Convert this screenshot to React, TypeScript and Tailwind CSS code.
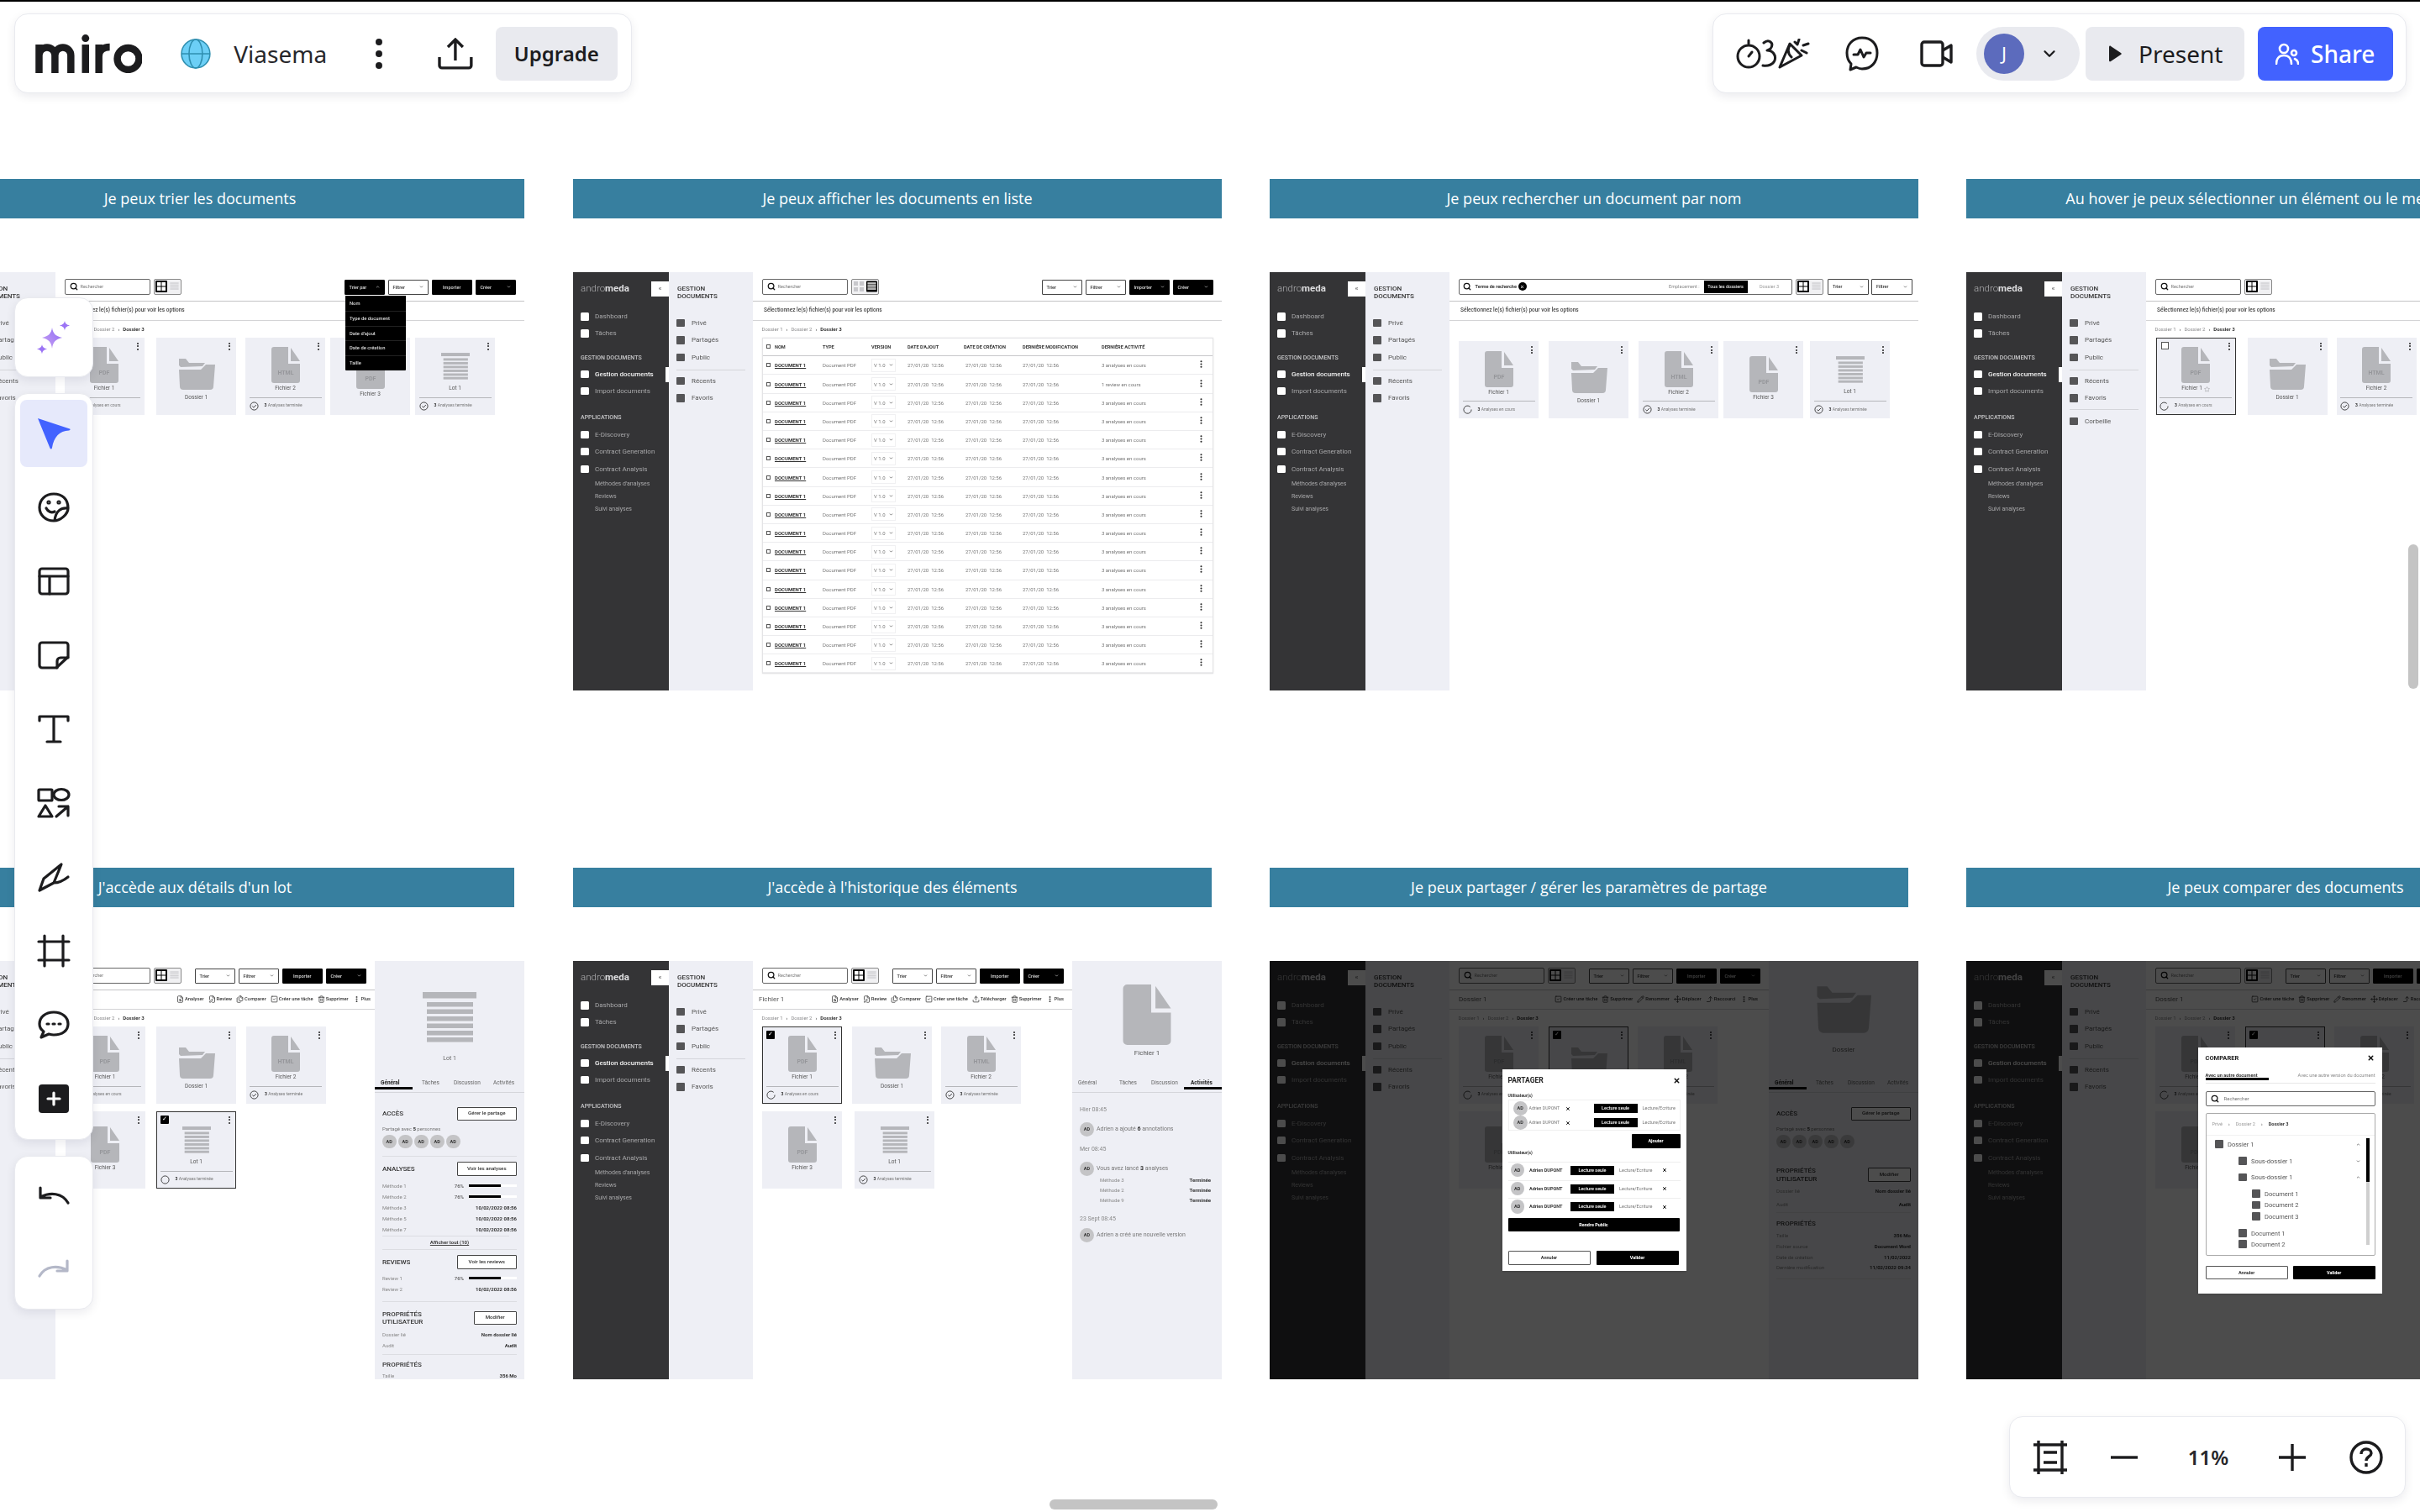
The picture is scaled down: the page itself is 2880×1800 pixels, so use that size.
import clsx from 'clsx';
import {
  ChevronDown,
  ChevronUp,
  CornerRightUp,
  FilePen,
  FileSearch,
  Files,
  Move,
  MoreVertical,
  Pencil,
  Search,
  SquareCheck,
  Star,
  Trash2,
  Upload,
  X,
} from 'lucide-react';
import { ReactNode } from 'react';

const INK = '#1c1c1e';

// ---- board drawings ----

const FileIcon = ({ label, className }: { label?: string; className?: string }) => (
  <svg viewBox="0 0 34 43" className={className}>
    <path
      d="M3 0H20V20H34V40a3 3 0 0 1-3 3H3a3 3 0 0 1-3-3V3a3 3 0 0 1 3-3Z"
      fill="#b5b6ba"
    />
    <path d="M23 1 34 17H23Z" fill="#b5b6ba" />
    {label && (
      <text x="17" y="33" textAnchor="middle" fontSize="7" fontWeight="700" fill="#96979b">
        {label}
      </text>
    )}
  </svg>
);

const FolderIcon = ({ className }: { className?: string }) => (
  <svg viewBox="0 0 44 37" className={className}>
    <path d="M1 0H9L13 5H32L29 9 3 10 1 8Z" fill="#b5b6ba" />
    <path
      d="M1 13H27L33 7H44L42 33a4 4 0 0 1-4 4H6a4 4 0 0 1-4-4Z"
      fill="#b5b6ba"
    />
  </svg>
);

const LotIcon = ({ className }: { className?: string }) => (
  <svg viewBox="0 0 64 60" className={className}>
    <rect x="0" width="64" height="7.5" fill="#b5b6ba" />
    {[12, 20.5, 29, 37.5, 46, 54].map((y) => (
      <rect key={y} x="5" y={y} width="55" height="5.5" fill="#b5b6ba" />
    ))}
  </svg>
);

const StatusIcon = ({ status }: { status: 'progress' | 'done' | 'empty' }) => (
  <svg viewBox="0 0 12 12" className="h-[11px] w-[11px] shrink-0" fill="none" stroke="#222" strokeWidth="0.9">
    {status === 'progress' && <path d="M9.5 2.6A5 5 0 1 0 11 6" />}
    {status !== 'progress' && <circle cx="6" cy="6" r="5" />}
    {status === 'done' && <path d="M3.6 6.1 5.4 7.8 8.6 4.4" />}
  </svg>
);

const Dots = ({ className }: { className?: string }) => (
  <div className={clsx('flex flex-col items-center gap-[1.5px]', className)}>
    <span className="h-[2px] w-[2px] rounded-full bg-[#222]" />
    <span className="h-[2px] w-[2px] rounded-full bg-[#222]" />
    <span className="h-[2px] w-[2px] rounded-full bg-[#222]" />
  </div>
);

// ---- mock: sidebars ----

const NavItem = ({ label, active, className }: { label: string; active?: boolean; className?: string }) => (
  <div className={clsx('relative flex h-[20px] items-center pl-[9px]', className)}>
    <span className="h-[9.5px] w-[10px] rounded-[1.5px] bg-white" />
    <span className={clsx('ml-[7px] text-[8px]', active ? 'font-medium text-[#f2f2f2]' : 'text-[#a8a8aa]')}>{label}</span>
    {active && <span className="absolute right-0 top-[1px] h-[18px] w-[4px] bg-white" />}
  </div>
);

const NavTitle = ({ label, className }: { label: string; className?: string }) => (
  <div className={clsx('flex h-[14px] items-center pl-[9px] text-[7px] font-medium text-[#c8c8ca]', className)}>{label}</div>
);

const SubItem = ({ label }: { label: string }) => (
  <div className="flex h-[15px] items-center pl-[26px] text-[7px] text-[#a8a8aa]">{label}</div>
);

const DarkSidebar = () => (
  <div className="w-[114px] shrink-0 bg-[#343436]">
    <div className="relative flex h-[40px] items-center pl-[9px] text-[11.5px] text-[#b0b0b2]">
      <span className="font-light">andro</span>
      <span className="font-bold text-[#dddddf]">meda</span>
      <div className="absolute right-0 top-[11px] flex h-[18px] w-[21px] items-center justify-center bg-white text-[7px] font-bold text-[#666]">«</div>
    </div>
    <NavItem label="Dashboard" className="mt-[3.5px]" />
    <NavItem label="Tâches" />
    <NavTitle label="GESTION DOCUMENTS" className="mt-[12.5px]" />
    <NavItem label="Gestion documents" active className="mt-[2px]" />
    <NavItem label="Import documents" />
    <NavTitle label="APPLICATIONS" className="mt-[14.5px]" />
    <NavItem label="E-Discovery" className="mt-[3.5px]" />
    <NavItem label="Contract Generation" />
    <NavItem label="Contract Analysis" className="mt-[1px]" />
    <SubItem label="Méthodes d'analyses" />
    <SubItem label="Reviews" />
    <SubItem label="Suivi analyses" />
  </div>
);

const PanelItem = ({ label }: { label: string }) => (
  <div className="flex h-[20.5px] items-center pl-[9px]">
    <span className="h-[9.5px] w-[10px] rounded-[1px] bg-[#555557]" />
    <span className="ml-[8px] text-[8px] text-[#555]">{label}</span>
  </div>
);

const LightPanel = ({ trash }: { trash?: boolean }) => (
  <div className="w-[100px] shrink-0 bg-[#eeeff5]">
    <div className="pl-[10px] pt-[15.5px] text-[8px] font-medium leading-[9.4px] text-[#333]">
      GESTION
      <br />
      DOCUMENTS
    </div>
    <div className="mt-[16.5px]">
      <PanelItem label="Privé" />
      <PanelItem label="Partagés" />
      <PanelItem label="Public" />
    </div>
    <div className="mx-[9px] mb-[2.5px] mt-[4px] h-px bg-[#d4d5da]" />
    <PanelItem label="Récents" />
    <PanelItem label="Favoris" />
    {trash && (
      <>
        <div className="mx-[9px] mb-[3px] mt-[3px] h-px bg-[#d4d5da]" />
        <PanelItem label="Corbeille" />
      </>
    )}
  </div>
);

// ---- mock: toolbar ----

const SearchBox = () => (
  <div className="flex h-[19px] w-[102px] items-center rounded-[2px] border border-[#666] bg-white pl-[5px]">
    <Search size={10} strokeWidth={3} color="#111" />
    <span className="ml-[3px] text-[5.5px] text-[#777]">Rechercher</span>
  </div>
);

const ViewToggle = ({ list }: { list?: boolean }) => (
  <div className="ml-[4px] flex h-[19px] w-[33px] items-center justify-center gap-[2px] rounded-[2px] border border-[#888] bg-[#f1f1f3]">
    <svg viewBox="0 0 14 14" className="h-[14px] w-[14px]">
      {list ? (
        <g fill="#c8c8cc">
          <rect x="1" y="1" width="5" height="5" />
          <rect x="8" y="1" width="5" height="5" />
          <rect x="1" y="8" width="5" height="5" />
          <rect x="8" y="8" width="5" height="5" />
        </g>
      ) : (
        <g>
          <rect width="14" height="14" rx="1" fill="#000" />
          <rect x="2" y="2" width="4.5" height="4.5" fill="#fff" />
          <rect x="7.5" y="2" width="4.5" height="4.5" fill="#fff" />
          <rect x="2" y="7.5" width="4.5" height="4.5" fill="#fff" />
          <rect x="7.5" y="7.5" width="4.5" height="4.5" fill="#fff" />
        </g>
      )}
    </svg>
    <svg viewBox="0 0 14 14" className="h-[14px] w-[13px]">
      {list && <rect width="14" height="14" rx="1" fill="#000" />}
      {[2, 4.5, 7, 9.5].map((y) => (
        <rect key={y} x="1.5" y={y} width="11" height="1.5" fill={list ? '#fff' : '#cfcfd3'} />
      ))}
    </svg>
  </div>
);

const Btn = ({ label, dark, open, chevron = true, className }: { label: string; dark?: boolean; open?: boolean; chevron?: boolean; className?: string }) => (
  <div
    className={clsx(
      'flex h-[18px] w-[48.5px] shrink-0 items-center rounded-[1px] border px-[5px] text-[5.5px] font-medium',
      dark ? 'border-black bg-black text-[#ddd]' : 'border-[#444] bg-white text-[#333]',
      chevron ? 'justify-between' : 'justify-center',
      className,
    )}
  >
    {label}
    {chevron && (open ? <ChevronUp size={5} strokeWidth={3} /> : <ChevronDown size={5} strokeWidth={3} />)}
  </div>
);

const Toolbar = ({ list, sortOpen, sortLabel = 'Trier', importChevron }: { list?: boolean; sortOpen?: boolean; sortLabel?: string; importChevron?: boolean }) => (
  <div className="flex h-[35px] items-start justify-between border-b border-[#c4c4c6] pl-[10.5px] pr-[10px] pt-[8px]">
    <div className="flex">
      <SearchBox />
      <ViewToggle list={list} />
    </div>
    <div className="mt-[1.4px] flex gap-[3.5px]">
      <Btn label={sortLabel} dark={sortOpen} open={sortOpen} />
      <Btn label="Filtrer" />
      <Btn label="Importer" dark chevron={!!importChevron} />
      <Btn label="Créer" dark />
    </div>
  </div>
);

const HintBar = () => (
  <div className="flex h-[23px] items-center border-b border-[#d4d4d6] pl-[13px] text-[6.5px] font-medium text-[#444]">
    Sélectionnez le(s) fichier(s) pour voir les options
  </div>
);

type Action = { icon: ReactNode; label: string };

const ActionBar = ({ title, actions, className }: { title?: string; actions: Action[]; className?: string }) => (
  <div className={clsx('flex h-[23px] items-center justify-between border-b border-[#d4d4d6] pl-[7px]', className)}>
    <span className="text-[8px] text-[#555]">{title}</span>
    <div className="flex items-center gap-[5px]">
      {actions.map((a) => (
        <span key={a.label} className="flex items-center gap-[1px] text-[5.8px] font-medium text-[#333]">
          {a.icon}
          {a.label}
        </span>
      ))}
    </div>
  </div>
);

const Crumbs = () => (
  <div className="flex h-[20px] items-center gap-[4px] pb-[4px] pl-[10.5px] pt-[3px] text-[6px] text-[#8a8a8c]">
    <span>Dossier 1</span>
    <span className="text-[#333]">›</span>
    <span>Dossier 2</span>
    <span className="text-[#333]">›</span>
    <span className="font-bold text-[#333]">Dossier 3</span>
  </div>
);

// ---- mock: cards ----

type Kind = 'pdf' | 'html' | 'pdf-plain' | 'folder' | 'lot';

const Card = ({
  kind,
  name,
  status,
  selected,
  checked,
  hover,
  star,
}: {
  kind: Kind;
  name: string;
  status?: ReactNode;
  selected?: boolean;
  checked?: boolean;
  hover?: boolean;
  star?: boolean;
}) => (
  <div
    className={clsx(
      'relative flex h-[92px] w-[95px] shrink-0 flex-col items-center bg-[#eeeff5]',
      selected && 'outline-[1.5px] -outline-offset-1 outline-[#333]',
      kind === 'folder' ? 'pt-[25px]' : kind === 'lot' ? 'pt-[18px]' : status ? 'pt-[11.5px]' : 'pt-[18px]',
    )}
  >
    <Dots className="absolute right-[7px] top-[6px]" />
    {hover && <span className="absolute left-[6px] top-[5px] h-[9px] w-[9px] border border-[#555] bg-white" />}
    {checked && (
      <span className="absolute left-[5px] top-[5px] flex h-[10px] w-[10px] items-center justify-center rounded-[1px] bg-black text-[7px] leading-none text-white">
        ✓
      </span>
    )}
    {kind === 'folder' && <FolderIcon className="h-[37px] w-[44px]" />}
    {kind === 'lot' && <LotIcon className="h-[32px] w-[34px]" />}
    {kind === 'pdf' && <FileIcon label="PDF" className="h-[43px] w-[34px] shrink-0" />}
    {kind === 'pdf-plain' && <FileIcon label="PDF" className="h-[43px] w-[34px] shrink-0" />}
    {kind === 'html' && <FileIcon label="HTML" className="h-[43px] w-[34px] shrink-0" />}
    <div className={clsx('flex h-[10px] items-center gap-[2px] text-[6.5px] text-[#555]', kind === 'folder' ? 'mt-[5px]' : kind === 'lot' ? 'mt-[6px]' : 'mt-[2px]')}>
      {name}
      {star && <Star size={7} strokeWidth={1} />}
    </div>
    {status}
  </div>
);

const CardStatus = ({ status, text }: { status: 'progress' | 'done' | 'empty'; text: string }) => (
  <div className="absolute inset-x-[4.5px] bottom-[5px] flex h-[16px] items-end border-t border-[#b5b6ba] text-[5px] text-[#777]">
    <StatusIcon status={status} />
    <span className="mb-[2px] ml-[7px]">
      <b className="text-[#333]">3</b> {text}
    </span>
  </div>
);

const Running = () => <CardStatus status="progress" text="Analyses en cours" />;
const Done = () => <CardStatus status="done" text="Analyses terminée" />;

// ---- mock: list view ----

const GRID = 'grid grid-cols-[14px_57px_58px_43px_67px_70px_94px_1fr] items-center';

const ListTable = () => (
  <div className="ml-[11px] mr-[10px] border border-[#e4e4e6] shadow-[0_0_2px_rgba(0,0,0,0.1)]">
    <div className={clsx(GRID, 'h-[21.8px] border-b border-[#c8c8ca] text-[5.6px] font-bold text-[#333]')}>
      <span className="ml-[4px] h-[5px] w-[4.5px] border border-[#555]" />
      <span>NOM</span>
      <span>TYPE</span>
      <span>VERSION</span>
      <span>DATE D'AJOUT</span>
      <span>DATE DE CRÉATION</span>
      <span>DERNIÈRE MODIFICATION</span>
      <span>DERNIÈRE ACTIVITÉ</span>
    </div>
    {Array.from({ length: 17 }, (_, i) => (
      <div key={i} className={clsx(GRID, 'h-[22.2px] border-b border-[#ececee] text-[6px] text-[#777]')}>
        <span className="ml-[4px] h-[5px] w-[4.5px] border border-[#555]" />
        <span className="font-bold text-[#333] underline">DOCUMENT 1</span>
        <span>Document PDF</span>
        <span className="flex h-[16px] w-[29px] items-center justify-between border border-[#f0f0f2] px-[2px]">
          V 1.0 <ChevronDown size={5} strokeWidth={3} color="#333" />
        </span>
        <span>27/01/20&nbsp; 12:56</span>
        <span className="pl-[2px]">27/01/20&nbsp; 12:56</span>
        <span>27/01/20&nbsp; 12:56</span>
        <span className="relative">
          {i === 1 ? '1 review en cours' : '3 analyses en cours'}
          <MoreVertical size={11} strokeWidth={2.5} color="#222" className="absolute right-[8px] top-[-2px]" />
        </span>
      </div>
    ))}
  </div>
);

// ---- mock: detail panels ----

const Tabs = ({ active }: { active: 'general' | 'activity' }) => (
  <div className="flex h-[20px] items-center border-b border-[#d4d5da] text-[6.5px] text-[#666]">
    <div className={clsx('relative ml-[7px] w-[49px]', active === 'general' && 'font-bold text-[#222]')}>
      Général
      {active === 'general' && <span className="absolute left-[-7px] top-[9px] h-[3px] w-[45px] bg-black" />}
    </div>
    <div className="w-[38px]">Tâches</div>
    <div className="w-[47px]">Discussion</div>
    <div className={clsx('relative', active === 'activity' && 'font-bold text-[#222]')}>
      Activités
      {active === 'activity' && <span className="absolute left-[-8px] top-[9px] h-[3px] w-[46px] bg-black" />}
    </div>
  </div>
);

const SectionHead = ({ title, action, small, className }: { title: ReactNode; action: string; small?: boolean; className?: string }) => (
  <div className={clsx('flex items-center justify-between', className)}>
    <span className="text-[8px] font-medium leading-[9.5px] text-[#333]">{title}</span>
    <span className={clsx('flex h-[16.5px] items-center justify-center rounded-[1px] border border-[#444] bg-white text-[6.2px] font-medium text-[#333]', small ? 'w-[51.5px]' : 'w-[71.5px]')}>{action}</span>
  </div>
);

const KV = ({ k, v, className }: { k: string; v: ReactNode; className?: string }) => (
  <div className={clsx('flex h-[12.8px] items-center justify-between text-[6px] text-[#888]', className)}>
    <span>{k}</span>
    <span className="font-bold text-[#333]">{v}</span>
  </div>
);

const Meter = ({ k, className }: { k: string; className?: string }) => (
  <div className={clsx('flex h-[12.8px] items-center text-[6px] text-[#888]', className)}>
    <span className="w-[86px]">{k}</span>
    <span className="w-[17.5px] font-medium text-[#555]">76%</span>
    <span className="h-[3px] w-[57px] bg-white">
      <span className="block h-[3px] w-[38px] bg-black" />
    </span>
  </div>
);

const Avatar = ({ className }: { className?: string }) => (
  <span className={clsx('flex h-[16.5px] w-[16.5px] shrink-0 items-center justify-center rounded-full bg-[#c4c4c6] text-[5.5px] font-bold text-[#333]', className)}>AD</span>
);

const Rule = ({ className }: { className?: string }) => <div className={clsx('h-px bg-[#dcdde2]', className)} />;

const AccessBlock = () => (
  <>
    <SectionHead title="ACCÈS" action="Gérer le partage" className="mt-[17px]" />
    <div className="mt-[4.5px] h-[10px] text-[6px] leading-[10px] text-[#777]">
      Partagé avec <b className="text-[#333]">5</b> personnes
    </div>
    <div className="mt-[2px] flex gap-[2.5px]">
      {[0, 1, 2, 3, 4].map((i) => (
        <Avatar key={i} />
      ))}
    </div>
  </>
);

const LotDetails = () => (
  <div className="w-[178px] shrink-0 overflow-hidden bg-[#eeeff5]">
    <div className="flex h-[137px] flex-col items-center pt-[37px]">
      <LotIcon className="h-[60px] w-[64px]" />
      <span className="mt-[14px] text-[7px] text-[#666]">Lot 1</span>
    </div>
    <Tabs active="general" />
    <div className="px-[9px]">
      <AccessBlock />
      <Rule className="mt-[9px]" />
      <SectionHead title="ANALYSES" action="Voir les analyses" className="mt-[6px]" />
      <Meter k="Méthode 1" className="mt-[6px]" />
      <Meter k="Méthode 2" />
      <KV k="Méthode 3" v="10/02/2022 08:56" />
      <KV k="Méthode 5" v="10/02/2022 08:56" />
      <KV k="Méthode 7" v="10/02/2022 08:56" />
      <Rule className="mr-[9px] mt-[2px] bg-[#c4c5ca]" />
      <div className="h-[12px] text-center text-[6px] font-bold leading-[14px] text-[#444] underline">Afficher tout (10)</div>
      <Rule className="mt-[3px]" />
      <SectionHead title="REVIEWS" action="Voir les reviews" className="mt-[6px]" />
      <Meter k="Review 1" className="mt-[4px]" />
      <KV k="Review 2" v="10/02/2022 08:56" />
      <Rule className="mt-[8px]" />
      <SectionHead
        title={
          <>
            PROPRIÉTÉS
            <br />
            UTILISATEUR
          </>
        }
        action="Modifier"
        small
        className="mt-[10px]"
      />
      <KV k="Dossier lié" v="Nom dossier lié" className="mt-[3.5px]" />
      <KV k="Audit" v="Audit" />
      <Rule className="mt-[4px] bg-[#c4c5ca]" />
      <div className="mt-[6px] text-[8px] font-medium leading-[12px] text-[#333]">PROPRIÉTÉS</div>
      <KV k="Taille" v="356 Mo" />
    </div>
  </div>
);

const FolderDetails = () => (
  <div className="w-[178px] shrink-0 bg-[#eeeff5]">
    <div className="flex h-[137px] flex-col items-center pt-[30px]">
      <FolderIcon className="h-[56px] w-[66px]" />
      <span className="mt-[14px] text-[8px] text-[#555]">Dossier</span>
    </div>
    <Tabs active="general" />
    <div className="px-[9px]">
      <AccessBlock />
      <SectionHead
        title={
          <>
            PROPRIÉTÉS
            <br />
            UTILISATEUR
          </>
        }
        action="Modifier"
        small
        className="mt-[22px]"
      />
      <KV k="Dossier lié" v="Nom dossier lié" className="mt-[3px]" />
      <KV k="Audit" v="Audit" className="mt-[3px]" />
      <Rule className="mt-[3px]" />
      <div className="mt-[7px] text-[8px] font-medium leading-[12px] text-[#333]">PROPRIÉTÉS</div>
      <KV k="Taille" v="356 Mo" className="mt-[1.5px]" />
      <KV k="Fichier source" v="Document Word" />
      <KV k="Date de création" v="11/02/2022" />
      <KV k="Dernière modification" v="11/02/2022 09:34" />
      <Rule className="mt-[7px]" />
    </div>
  </div>
);

const ActivityRow = ({ children, className }: { children: ReactNode; className?: string }) => (
  <div className={clsx('flex items-center gap-[3px] text-[7px] text-[#777]', className)}>
    <Avatar className="h-[17px] w-[17px]" />
    <span>{children}</span>
  </div>
);

const FileDetails = () => (
  <div className="w-[178px] shrink-0 bg-[#eeeff5]">
    <div className="flex h-[137px] flex-col items-center pt-[28px]">
      <FileIcon className="h-[72px] w-[58px]" />
      <span className="mt-[4px] text-[8px] text-[#555]">Fichier 1</span>
    </div>
    <Tabs active="activity" />
    <div className="px-[9px] pr-[13px] text-[7px] text-[#888]">
      <div className="mt-[15px] h-[10px] leading-[10px]">Hier 08:45</div>
      <ActivityRow className="mt-[10px]">
        Adrien a ajouté <b className="text-[#333]">6</b> annotations
      </ActivityRow>
      <div className="mt-[10px] h-[10px] leading-[10px]">Mer 08:45</div>
      <ActivityRow className="mt-[10px]">
        Vous avez lancé <b className="text-[#333]">3</b> analyses
      </ActivityRow>
      <div className="-mt-[1px] pl-[24px]">
        <KV k="Méthode 3" v="Terminée" className="h-[12px]" />
        <KV k="Méthode 2" v="Terminée" className="h-[12px]" />
        <KV k="Méthode 9" v="Terminée" className="h-[12px]" />
      </div>
      <div className="mt-[11px] h-[10px] leading-[10px]">23 Sept 08:45</div>
      <ActivityRow className="mt-[6px]">Adrien a créé une nouvelle version</ActivityRow>
    </div>
  </div>
);

// ---- mock: modals ----

const ModalBtn = ({ label, dark, className }: { label: string; dark?: boolean; className?: string }) => (
  <span className={clsx('flex h-[16.5px] items-center justify-center rounded-[1px] text-[5.5px] font-bold', dark ? 'bg-black text-white' : 'border border-[#555] bg-white text-[#333]', className)}>
    {label}
  </span>
);

const Perm = ({ className }: { className?: string }) => (
  <span className={clsx('flex h-[11px] w-[104px] items-center whitespace-nowrap bg-white text-[5.5px] text-[#777]', className)}>
    <span className="flex h-[11px] w-[52px] items-center justify-center bg-black font-medium text-white">Lecture seule</span>
    <span className="ml-[6px]">Lecture/Ecriture</span>
  </span>
);

const ShareRow = ({ small, className }: { small?: boolean; className?: string }) =>
  small ? (
    <div className={clsx('flex h-[16px] items-center pl-[5.5px]', className)}>
      <Avatar className="h-[12px] w-[12px] text-[3.5px]" />
      <span className="ml-[2px] w-[44px] whitespace-nowrap text-[5.2px] text-[#777]">Adrien DUPONT</span>
      <X size={6} strokeWidth={4} color="#111" />
      <Perm className="ml-[28px]" />
    </div>
  ) : (
    <div className={clsx('flex h-[20px] items-center border-t border-[#eeeeee] pl-[3px]', className)}>
      <Avatar className="h-[15px] w-[15px]" />
      <span className="ml-[6px] w-[46px] whitespace-nowrap text-[5.5px] font-bold text-[#333]">Adrien DUPONT</span>
      <Perm className="ml-[3px]" />
      <X size={6} strokeWidth={4} color="#111" className="ml-[5px]" />
    </div>
  );

const ShareModal = () => (
  <div className="absolute left-[276.5px] top-[129px] h-[240px] w-[219px] bg-white px-[7px] shadow-sm">
    <div className="flex h-[27px] items-center justify-between">
      <span className="text-[8.5px] font-bold text-[#222]">PARTAGER</span>
      <X size={9} strokeWidth={4} color="#111" />
    </div>
    <div className="h-[8px] text-[5px] font-bold leading-[8px] text-[#333]">Utilisateur(s)</div>
    <div className="mt-[1px] h-[37px] border border-[#f0f0f0] pt-[2px]">
      <ShareRow small />
      <ShareRow small className="mt-[1px]" />
    </div>
    <div className="mt-[4.5px] flex justify-end">
      <ModalBtn label="Ajouter" dark className="w-[58px]" />
    </div>
    <div className="mt-[1px] h-[8px] text-[5px] font-bold leading-[8px] text-[#333]">Utilisateur(s)</div>
    <ShareRow className="mt-[7px]" />
    <ShareRow className="mt-[2px]" />
    <ShareRow className="mt-[1.5px]" />
    <ModalBtn label="Rendre Public" dark className="mt-[3.5px] w-[204px]" />
    <div className="mt-[23px] flex gap-[7px]">
      <ModalBtn label="Annuler" className="w-[98px]" />
      <ModalBtn label="Valider" dark className="w-[98px]" />
    </div>
  </div>
);

const TreeRow = ({ label, indent, chevron }: { label: string; indent: string; chevron?: 'up' | 'down' }) => (
  <div className={clsx('flex items-center pr-[17px]', indent)}>
    <span className="h-[9.5px] w-[10px] rounded-[1px] bg-[#555557]" />
    <span className="ml-[5.5px] flex-1 text-[7.5px] text-[#555]">{label}</span>
    {chevron === 'up' && <ChevronUp size={5} strokeWidth={3} color="#333" />}
    {chevron === 'down' && <ChevronDown size={5} strokeWidth={3} color="#333" />}
  </div>
);

const CompareModal = () => (
  <div className="absolute left-[276px] top-[103px] h-[293px] w-[219px] bg-white px-[8.5px] shadow-sm">
    <div className="flex h-[26px] items-center justify-between">
      <span className="text-[7.5px] font-bold text-[#222]">COMPARER</span>
      <X size={9} strokeWidth={4} color="#111" className="mr-[1px]" />
    </div>
    <div className="flex h-[17px] items-center justify-between border-b border-[#e8e8e8] text-[5.7px] text-[#888]">
      <span className="relative font-bold text-[#333]">
        Avec un autre document
        <span className="absolute left-0 top-[7px] h-[3px] w-[75px] bg-black" />
      </span>
      <span>Avec une autre version du document</span>
    </div>
    <div className="mt-[9px] flex h-[18px] items-center rounded-[2px] border border-[#666] pl-[5px]">
      <Search size={10} strokeWidth={3} color="#111" />
      <span className="ml-[6px] text-[6px] text-[#777]">Rechercher</span>
    </div>
    <div className="relative mt-[8px] h-[170px] rounded-[2px] border border-[#aaa]">
      <div className="flex h-[26px] items-center gap-[7px] border-b border-[#f2f2f2] pl-[7px] text-[5.6px] text-[#999]">
        <span>Privé</span>
        <span className="text-[#333]">›</span>
        <span>Dossier 2</span>
        <span className="text-[#333]">›</span>
        <span className="font-bold text-[#333]">Dossier 3</span>
      </div>
      <div className="mt-[5px] flex flex-col">
        <div className="h-[20px]">
          <TreeRow label="Dossier 1" indent="pl-[10px]" chevron="up" />
        </div>
        <div className="h-[19.5px]">
          <TreeRow label="Sous-dossier 1" indent="pl-[38px]" chevron="down" />
        </div>
        <div className="h-[19.5px]">
          <TreeRow label="Sous-dossier 1" indent="pl-[38px]" chevron="up" />
        </div>
        <div className="h-[13.5px]">
          <TreeRow label="Document 1" indent="pl-[54px]" />
        </div>
        <div className="h-[13.5px]">
          <TreeRow label="Document 2" indent="pl-[54px]" />
        </div>
        <div className="h-[20px]">
          <TreeRow label="Document 3" indent="pl-[54px]" />
        </div>
        <div className="h-[13px]">
          <TreeRow label="Document 1" indent="pl-[38px]" />
        </div>
        <div className="h-[13px]">
          <TreeRow label="Document 2" indent="pl-[38px]" />
        </div>
      </div>
      <div className="absolute right-[6px] top-[29px] h-[127px] w-[4px] bg-[#cfcfcf]">
        <div className="h-[52px] w-[4px] bg-black" />
      </div>
    </div>
    <div className="mt-[12px] flex gap-[6px]">
      <ModalBtn label="Annuler" className="w-[99px]" />
      <ModalBtn label="Valider" dark className="w-[98.5px]" />
    </div>
  </div>
);

// ---- action sets ----

const ic = 'shrink-0';
const A = {
  analyser: { icon: <FileSearch size={9} className={ic} />, label: 'Analyser' },
  review: { icon: <FilePen size={9} className={ic} />, label: 'Review' },
  comparer: { icon: <Files size={9} className={ic} />, label: 'Comparer' },
  tache: { icon: <SquareCheck size={9} className={ic} />, label: 'Créer une tâche' },
  telecharger: { icon: <Upload size={9} className={ic} />, label: 'Télécharger' },
  supprimer: { icon: <Trash2 size={9} className={ic} />, label: 'Supprimer' },
  renommer: { icon: <Pencil size={9} className={ic} />, label: 'Renommer' },
  deplacer: { icon: <Move size={9} className={ic} />, label: 'Déplacer' },
  raccourci: { icon: <CornerRightUp size={9} className={ic} />, label: 'Raccourci' },
  plus: { icon: <MoreVertical size={9} strokeWidth={3} className={ic} />, label: 'Plus' },
};

const folderActions = [A.tache, A.supprimer, A.renommer, A.deplacer, A.raccourci, A.plus];

// ---- frame ----

const Frame = ({ title, className, titleClass, children }: { title: string; className: string; titleClass: string; children: ReactNode }) => (
  <section className={clsx('absolute w-[772px]', className)}>
    <div className={clsx("flex h-[47px] items-center justify-center bg-[#377f9f] font-['Open_Sans',sans-serif] text-[18px] text-white", titleClass)}>
      <span className="whitespace-nowrap">{title}</span>
    </div>
    <div className="relative mt-[63.5px] flex h-[498px] w-[772px] overflow-hidden bg-white font-['Roboto',sans-serif] blur-[0.3px]">{children}</div>
  </section>
);

const TwoRows = ({ second }: { second?: 'lot' | 'dossier' | 'none' }) => (
  <div className="pl-[11px]">
    <div className="flex">
      <Card kind="pdf" name="Fichier 1" status={<Running />} selected={second === 'lot'} checked={second === 'lot'} />
      <div className="w-[12px] shrink-0" />
      <Card kind="folder" name="Dossier 1" selected={second === 'dossier'} checked={second === 'dossier'} />
      <div className="w-[11px] shrink-0" />
      <Card kind="html" name="Fichier 2" status={<Done />} />
    </div>
    <div className="mt-[9px] flex">
      <Card kind="pdf-plain" name="Fichier 3" />
      <div className="w-[15px] shrink-0" />
      <Card kind="lot" name="Lot 1" status={<Done />} />
    </div>
  </div>
);

// ---- miro chrome ----

const Box = ({ className, children }: { className: string; children: ReactNode }) => (
  <div className={clsx('absolute rounded-[16px] border border-[#e9eaef] bg-white shadow-[0_4px_12px_rgba(5,0,56,0.08)]', className)}>{children}</div>
);

const ToolIcon = ({ children, active, viewBox = '0 0 40 40' }: { children: ReactNode; active?: boolean; viewBox?: string }) => (
  <div className={clsx('mb-[8px] flex h-[80px] w-[80px] items-center justify-center rounded-[8px]', active && 'bg-[#e6e9fb]')}>
    <svg viewBox={viewBox} className="h-[40px] w-[40px]" fill="none" stroke={INK} strokeWidth="3.2" strokeLinecap="round" strokeLinejoin="round">
      {children}
    </svg>
  </div>
);

const MiroLogo = () => (
  <svg viewBox="0 0 128 46" className="h-[46px] w-[128px]" fill="none" stroke="#1c1c1e" strokeWidth="8.5">
    <path d="M4.5 46V12M4.5 25a8.5 8.5 0 0 1 19 0V46M23.5 25a8.5 8.5 0 0 1 19 0V46" />
    <path d="M60 46V12" />
    <circle cx="60" cy="4.5" r="4.5" fill="#1c1c1e" stroke="none" />
    <path d="M76 46V12M76 26c0-7 5-11 13-11" />
    <circle cx="111" cy="29" r="13" />
  </svg>
);

const TopLeft = () => (
  <Box className="left-[17px] top-[16px] flex h-[95px] w-[735px] items-center pl-[24px] pr-[16px] font-['Noto_Sans',sans-serif]">
    <MiroLogo />
    <svg viewBox="0 0 36 36" className="ml-[46px] h-[36px] w-[36px]" fill="#6ccff6" stroke="#2f8fb0" strokeWidth="1.6">
      <circle cx="18" cy="18" r="17" />
      <ellipse cx="18" cy="18" rx="8" ry="17" fill="none" />
      <path d="M1 18h34" />
    </svg>
    <span className="ml-[27px] w-[112px] whitespace-nowrap text-[28px] text-[#27272b]">Viasema</span>
    <svg viewBox="0 0 8 36" className="ml-[57px] h-[36px] w-[8px]" fill={INK}>
      <circle cx="4" cy="4" r="4" />
      <circle cx="4" cy="18" r="4" />
      <circle cx="4" cy="32" r="4" />
    </svg>
    <svg viewBox="0 0 42 38" className="ml-[66px] h-[38px] w-[42px]" fill="none" stroke={INK} strokeWidth="3.4">
      <path d="M21 27V2M12 11l9-9 9 9" />
      <path d="M2 23v10a3 3 0 0 0 3 3h32a3 3 0 0 0 3-3V23" />
    </svg>
    <span className="ml-[27px] flex h-[64px] w-[146px] items-center justify-center rounded-[8px] bg-[#e9eaef] text-[24px] font-semibold text-[#1c1c1e]">Upgrade</span>
  </Box>
);

const TopRight = () => (
  <Box className="left-[2038px] top-[16px] flex h-[95px] w-[826px] items-center pl-[27px] font-['Noto_Sans',sans-serif]">
    <svg viewBox="0 0 88 36" className="h-[36px] w-[88px]" fill="none" stroke={INK} strokeWidth="3" strokeLinecap="round" strokeLinejoin="round">
      <circle cx="15" cy="21" r="13" />
      <path d="M15 2v4M15 21l4-5" />
      <path d="M33 5c6-5 13 0 8 7l-4 2c7 0 11 6 9 12-2 5-8 7-14 6" />
      <path d="M52 34 78 20 64 6 52 34Z" />
      <path d="M66 22c-4-4-5-9-2-14M70 4l3 3 2-6M80 8l6-2M78 14l6 3" />
    </svg>
    <svg viewBox="0 0 42 42" className="ml-[41px] h-[42px] w-[42px]" fill="none" stroke={INK} strokeWidth="3" strokeLinecap="round" strokeLinejoin="round">
      <path d="M21 2C10 2 3 10 3 20c0 6 2 10 5 13l-1 7 7-3c2 1 5 2 7 2 11 0 18-8 18-19S32 2 21 2Z" />
      <path d="M11 22h5l3-6 4 9 3-5h5" />
    </svg>
    <svg viewBox="0 0 40 32" className="ml-[48px] h-[32px] w-[40px]" fill="none" stroke={INK} strokeWidth="3.4" strokeLinejoin="round">
      <rect x="2" y="2" width="25" height="28" rx="3" />
      <path d="M27 12l10-6v20l-10-6" />
    </svg>
    <div className="ml-[27px] flex h-[64px] w-[123px] items-center rounded-full bg-[#e9eaef] pl-[9px]">
      <span className="flex h-[48px] w-[48px] items-center justify-center rounded-full bg-[#5c6bbd] text-[22px] text-white">J</span>
      <ChevronDown size={22} strokeWidth={2.5} color={INK} className="ml-[19px]" />
    </div>
    <div className="ml-[7px] flex h-[64px] w-[189px] items-center rounded-[8px] bg-[#e9eaef] pl-[27px] text-[28px] text-[#1c1c1e]">
      <svg viewBox="0 0 16 20" className="h-[20px] w-[16px]" fill={INK}>
        <path d="M1 2c0-1 1-2 2-1l12 8c1 .6 1 1.4 0 2L3 19c-1 .6-2 0-2-1Z" />
      </svg>
      <span className="ml-[20px]">Present</span>
    </div>
    <div className="ml-[16px] flex h-[64px] w-[161px] items-center rounded-[8px] bg-[#4262ff] pl-[21px] text-[28px] font-medium text-white">
      <svg viewBox="0 0 28 26" className="h-[26px] w-[28px]" fill="none" stroke="#fff" strokeWidth="2.6" strokeLinecap="round">
        <circle cx="10" cy="7" r="5" />
        <path d="M1 25c0-6 3-10 9-10s9 4 9 10" />
        <circle cx="22" cy="12" r="3" />
        <path d="M23 19c2 1 4 3 4 6" />
      </svg>
      <span className="ml-[14px]">Share</span>
    </div>
  </Box>
);

const LeftBar = () => (
  <div className="absolute left-[17px] top-[354px] flex w-[94px] flex-col gap-[19px]">
    <div className="flex h-[95px] items-center justify-center rounded-[16px] border border-[#e9eaef] bg-white shadow-[0_4px_12px_rgba(5,0,56,0.08)]">
      <svg viewBox="0 0 40 40" className="h-[40px] w-[40px]">
        <defs>
          <linearGradient id="spark" x1="0" y1="1" x2="1" y2="0">
            <stop offset="0" stopColor="#cda4f2" />
            <stop offset="1" stopColor="#8b6af5" />
          </linearGradient>
        </defs>
        <path d="M18 8c1 7 4 10 12 12-8 2-11 5-12 13-1-8-4-11-12-13 8-2 11-5 12-12Z" fill="url(#spark)" />
        <path d="M33 0c.5 3 2 4.500 6 5.500-4 1-5.500 2.500-6 6-.5-3.500-2-5-6-6 4-1 5.500-2.500 6-5.500Z" fill="#9c74f5" />
        <path d="M6 28c.5 3 2 4.500 6 5.500-4 1-5.500 2.500-6 6-.5-3.500-2-5-6-6 4-1 5.500-2.500 6-5.500Z" fill="#9c74f5" />
      </svg>
    </div>
    <div className="flex flex-col items-center rounded-[16px] border border-[#e9eaef] bg-white pt-[7px] shadow-[0_4px_12px_rgba(5,0,56,0.08)]">
      <ToolIcon active>
        <path d="M1 2 39 14.500C40 15 39.500 16.500 38 16.500 27 17 20 24 18 37c-.3 2-2 2-2.500.5Z" fill="#4262ff" stroke="none" />
      </ToolIcon>
      <ToolIcon>
        <path d="M37 21C37 10 30 4 20 4S3 11 3 20s7 16 17 16c8 0 17-8 17-15Zm0 0c-8-1-15 3-16 15" />
        <path d="M11 21c2 4 6 6 10 4" />
        <circle cx="14" cy="14" r="1" />
        <circle cx="26" cy="14" r="1" />
      </ToolIcon>
      <ToolIcon>
        <rect x="3" y="5" width="34" height="30" rx="3" />
        <path d="M3 14h34M15 14v21" />
      </ToolIcon>
      <ToolIcon>
        <path d="M6 5h28a3 3 0 0 1 3 3v14L23 35H6a3 3 0 0 1-3-3V8a3 3 0 0 1 3-3Z" />
        <path d="M37 23H28a4 4 0 0 0-4 4v8" />
      </ToolIcon>
      <ToolIcon>
        <path d="M3 10V5h34v5M20 5v30M12 35h16" />
      </ToolIcon>
      <ToolIcon>
        <rect x="2" y="4" width="16" height="13" rx="1" />
        <path d="M10 23 18 36H2Z" />
        <ellipse cx="29" cy="10" rx="9" ry="6.500" />
        <path d="M23 36 37 24M26 24h11v11" />
      </ToolIcon>
      <ToolIcon>
        <path d="M3 36 8 22 29 5 20 27 3 36ZM20 27c6 0 12-3 17-7" />
      </ToolIcon>
      <ToolIcon>
        <path d="M9 2v36M31 2v36M2 9h36M2 31h36" />
      </ToolIcon>
      <ToolIcon>
        <path d="M20 5C10 5 3 11 3 19c0 4 2 7 5 9l-3 7 9-4c2 .5 4 1 6 1 10 0 17-5 17-13S30 5 20 5Z" />
        <path d="M12 19h2M19 19h2M26 19h2" />
      </ToolIcon>
      <ToolIcon>
        <rect x="2" y="3" width="36" height="34" rx="4" fill={INK} stroke="none" />
        <path d="M20 13v14M13 20h14" stroke="#fff" />
      </ToolIcon>
    </div>
    <div className="flex h-[183px] flex-col items-center rounded-[16px] border border-[#e9eaef] bg-white pt-[7px] shadow-[0_4px_12px_rgba(5,0,56,0.08)]">
      <ToolIcon>
        <path d="M37 28C30 16 16 15 4 21M4 10v12h12" />
      </ToolIcon>
      <div className="-mt-[1px] flex h-[80px] w-[80px] items-center justify-center">
        <svg viewBox="0 0 40 40" className="h-[40px] w-[40px]" fill="none" stroke="#b4b8c8" strokeWidth="3.2" strokeLinecap="round" strokeLinejoin="round">
          <path d="M3 28C10 16 24 15 36 21M36 10v12H24" />
        </svg>
      </div>
    </div>
  </div>
);

const ZoomBar = () => (
  <Box className="left-[2391px] top-[1686px] flex h-[97px] w-[472px] items-center pl-[28px] font-['Noto_Sans',sans-serif]">
    <svg viewBox="0 0 40 40" className="h-[40px] w-[40px]" fill="none" stroke={INK} strokeWidth="3.4">
      <path d="M6 0v40M34 0v40M0 5h40M0 35h40M12 14h16M12 26h16" />
    </svg>
    <svg viewBox="0 0 32 32" className="ml-[52px] h-[32px] w-[32px]" fill="none" stroke={INK} strokeWidth="3.4">
      <path d="M0 16h32" />
    </svg>
    <span className="ml-[56px] w-[56px] text-center text-[24px] font-semibold text-[#27272b]">11%</span>
    <svg viewBox="0 0 32 32" className="ml-[56px] h-[32px] w-[32px]" fill="none" stroke={INK} strokeWidth="3.4">
      <path d="M0 16h32M16 0v32" />
    </svg>
    <svg viewBox="0 0 40 40" className="ml-[52px] h-[40px] w-[40px]" fill="none" stroke={INK} strokeWidth="3.4">
      <circle cx="20" cy="20" r="18" />
      <path d="M14 16c0-4 3-6 6-6s6 2 6 5c0 4-6 4-6 9" />
      <path d="M20 27v4" />
    </svg>
  </Box>
);

export default function App() {
  return (
    <div className="relative h-[1800px] w-[2880px] overflow-hidden bg-white">
      <div className="h-[2px] bg-black" />

      <Frame title="Je peux trier les documents" className="left-[-148px] top-[213px]" titleClass="w-[772px]">
        <DarkSidebar />
        <LightPanel />
        <div className="relative min-w-0 flex-1">
          <Toolbar sortOpen sortLabel="Trier par" />
          <HintBar />
          <Crumbs />
          <div className="flex pl-[10.5px]">
            <Card kind="pdf" name="Fichier 1" status={<Running />} />
            <div className="w-[14.5px] shrink-0" />
            <Card kind="folder" name="Dossier 1" />
            <div className="w-[11px] shrink-0" />
            <Card kind="html" name="Fichier 2" status={<Done />} />
            <div className="w-[6px] shrink-0" />
            <Card kind="pdf-plain" name="Fichier 3" />
            <div className="w-[6px] shrink-0" />
            <Card kind="lot" name="Lot 1" status={<Done />} />
          </div>
          <div className="absolute left-[345px] top-[28.5px] w-[71.500px] rounded-b-[1px] bg-black text-[5.8px] font-medium text-[#ddd]">
            {['Nom', 'Type de document', 'Date d’ajout', 'Date de création', 'Taille'].map((o, i) => (
              <div key={o} className={clsx('flex h-[17.8px] items-center pl-[5px]', i > 0 && 'border-t border-[#222]')}>
                {o}
              </div>
            ))}
          </div>
        </div>
      </Frame>

      <Frame title="Je peux afficher les documents en liste" className="left-[682px] top-[213px]" titleClass="w-[772px]">
        <DarkSidebar />
        <LightPanel />
        <div className="min-w-0 flex-1">
          <Toolbar list importChevron />
          <HintBar />
          <Crumbs />
          <ListTable />
        </div>
      </Frame>

      <Frame title="Je peux rechercher un document par nom" className="left-[1511px] top-[213px]" titleClass="w-[772px]">
        <DarkSidebar />
        <LightPanel />
        <div className="min-w-0 flex-1">
          <div className="flex h-[35px] items-start border-b border-[#c4c4c6] pl-[10.5px] pt-[8px]">
            <div className="flex h-[19px] w-[397px] items-center rounded-[2px] border border-[#666] pl-[4px] text-[5.5px]">
              <Search size={10} strokeWidth={3} color="#111" />
              <span className="ml-[5px] font-bold text-[#333]">Terme de recherche</span>
              <span className="ml-[2px] flex h-[10px] w-[10px] items-center justify-center rounded-full bg-black">
                <X size={5} strokeWidth={4} color="#fff" />
              </span>
              <span className="ml-auto text-[#888]">Emplacement :</span>
              <span className="ml-[5px] flex h-[15px] w-[52px] items-center justify-center bg-black text-white">Tous les dossiers</span>
              <span className="flex w-[52px] justify-center text-[#999]">Dossier 3</span>
            </div>
            <ViewToggle />
            <div className="ml-[5.5px] flex gap-[3.5px]">
              <Btn label="Trier" className="h-[19px]" />
              <Btn label="Filtrer" className="h-[19px]" />
            </div>
          </div>
          <HintBar />
          <div className="mt-[24.5px] flex pl-[11px]">
            <Card kind="pdf" name="Fichier 1" status={<Running />} />
            <div className="w-[12px] shrink-0" />
            <Card kind="folder" name="Dossier 1" />
            <div className="w-[12px] shrink-0" />
            <Card kind="html" name="Fichier 2" status={<Done />} />
            <div className="w-[6px] shrink-0" />
            <Card kind="pdf-plain" name="Fichier 3" />
            <div className="w-[8px] shrink-0" />
            <Card kind="lot" name="Lot 1" status={<Done />} />
          </div>
        </div>
      </Frame>

      <Frame
        title="Au hover je peux sélectionner un élément ou le mettre en favori"
        className="left-[2340px] top-[213px]"
        titleClass="w-[772px]"
      >
        <DarkSidebar />
        <LightPanel trash />
        <div className="min-w-0 flex-1">
          <Toolbar />
          <HintBar />
          <Crumbs />
          <div className="flex pl-[11.5px]">
            <Card kind="pdf" name="Fichier 1" status={<Running />} selected hover star />
            <div className="w-[14px] shrink-0" />
            <Card kind="folder" name="Dossier 1" />
            <div className="w-[11px] shrink-0" />
            <Card kind="html" name="Fichier 2" status={<Done />} />
          </div>
        </div>
      </Frame>

      <Frame title="J'accède aux détails d'un lot" className="left-[-148px] top-[1033px]" titleClass="w-[760px]">
        <DarkSidebar />
        <LightPanel />
        <div className="min-w-0 flex-1">
          <Toolbar />
          <ActionBar className="pr-[5px]" actions={[A.analyser, A.review, A.comparer, A.tache, A.supprimer, A.plus]} />
          <Crumbs />
          <div className="pl-[11.5px]">
            <div className="flex">
              <Card kind="pdf" name="Fichier 1" status={<Running />} />
              <div className="w-[13.5px] shrink-0" />
              <Card kind="folder" name="Dossier 1" />
              <div className="w-[11.5px] shrink-0" />
              <Card kind="html" name="Fichier 2" status={<Done />} />
            </div>
            <div className="mt-[9px] flex">
              <Card kind="pdf-plain" name="Fichier 3" />
              <div className="w-[13.5px] shrink-0" />
              <Card kind="lot" name="Lot 1" status={<CardStatus status="empty" text="Analyses terminée" />} selected checked />
            </div>
          </div>
        </div>
        <LotDetails />
      </Frame>

      <Frame title="J'accède à l'historique des éléments" className="left-[682px] top-[1033px]" titleClass="w-[760px]">
        <DarkSidebar />
        <LightPanel />
        <div className="min-w-0 flex-1">
          <Toolbar />
          <ActionBar title="Fichier 1" className="pr-[10px]" actions={[A.analyser, A.review, A.comparer, A.tache, A.telecharger, A.supprimer, A.plus]} />
          <Crumbs />
          <TwoRows second="lot" />
        </div>
        <FileDetails />
      </Frame>

      <Frame title="Je peux partager / gérer les paramètres de partage" className="left-[1511px] top-[1033px]" titleClass="w-[760px]">
        <DarkSidebar />
        <LightPanel />
        <div className="min-w-0 flex-1">
          <Toolbar />
          <ActionBar title="Dossier 1" className="pl-[11px] pr-[13px]" actions={folderActions} />
          <Crumbs />
          <TwoRows second="dossier" />
        </div>
        <FolderDetails />
        <div className="absolute inset-0 bg-black/70" />
        <ShareModal />
      </Frame>

      <Frame title="Je peux comparer des documents" className="left-[2340px] top-[1033px]" titleClass="w-[760px]">
        <DarkSidebar />
        <LightPanel />
        <div className="min-w-0 flex-1">
          <Toolbar />
          <ActionBar title="Dossier 1" className="pl-[11px] pr-[13px]" actions={folderActions} />
          <Crumbs />
          <TwoRows second="dossier" />
        </div>
        <FolderDetails />
        <div className="absolute inset-0 bg-black/70" />
        <CompareModal />
      </Frame>

      <TopLeft />
      <TopRight />
      <LeftBar />
      <ZoomBar />

      <div className="absolute left-[2866px] top-[648px] h-[172px] w-[12px] rounded-full bg-[#c4c4c4]" />
      <div className="absolute left-[1249px] top-[1785px] h-[12px] w-[200px] rounded-full bg-[#c4c4c4]" />
    </div>
  );
}
